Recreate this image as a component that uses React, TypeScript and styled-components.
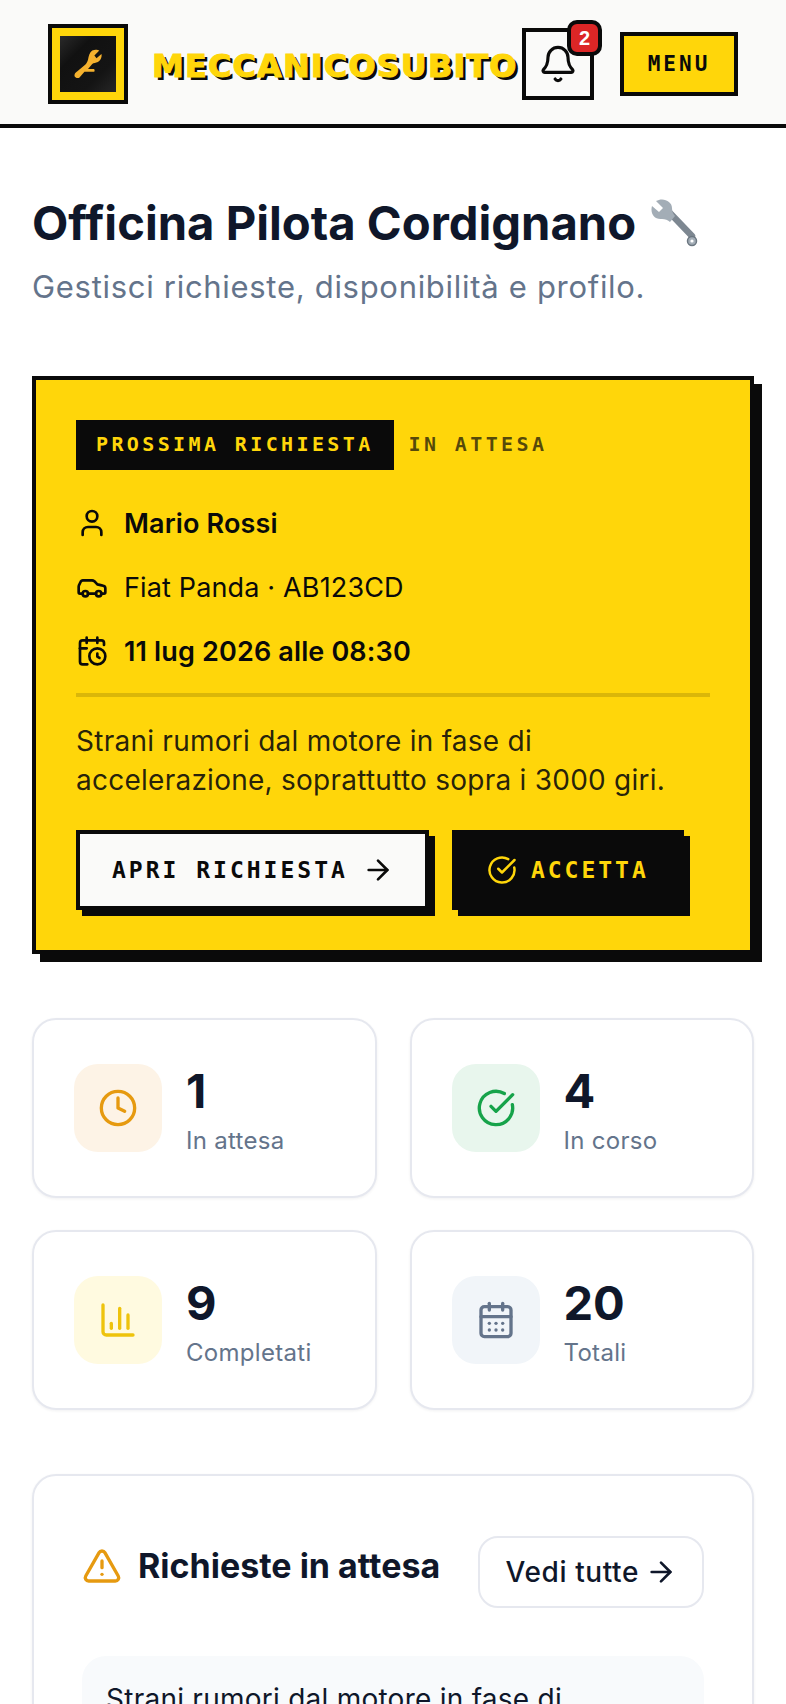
import { ReactNode } from "react";
import styled, { createGlobalStyle } from "styled-components";
import {
  ArrowRight,
  Bell,
  CalendarClock,
  CalendarDays,
  Car,
  ChartColumn,
  CircleCheckBig,
  Clock,
  TriangleAlert,
  User,
} from "lucide-react";

const GlobalStyle = createGlobalStyle`
  * { box-sizing: border-box; }
  html, body { margin: 0; padding: 0; background: #fff; }
  body { font-family: Inter, "Liberation Sans", sans-serif; color: #0f172a; }
  #root { height: 1704px; overflow: hidden; }
`;

const MONO = `"DejaVu Sans Mono", "Liberation Mono", monospace`;
const YELLOW = "#ffd60a";
const INK = "#0a0a0a";
const LINE = "#e6e8ef";

const Header = styled.header`
  display: flex;
  align-items: center;
  height: 128px;
  padding: 4px 48px 0;
  background: #fafaf9;
  border-bottom: 4px solid ${INK};
`;

const LogoFrame = styled.div`
  flex: none;
  width: 80px;
  height: 80px;
  padding: 8px;
  background: ${YELLOW};
  border: 4px solid ${INK};
`;

const LogoImage = styled.div`
  display: flex;
  align-items: center;
  justify-content: center;
  width: 100%;
  height: 100%;
  background: linear-gradient(135deg, #2a2a2a 0%, #111 30%, #141414 70%, #262626 100%);
`;

const Brand = styled.div`
  flex: none;
  margin: 4px 0 0 24px;
  width: 370px;
  font-family: "DejaVu Sans", "Liberation Sans", sans-serif;
  font-size: 32px;
  font-weight: 700;
  letter-spacing: 1.1px;
  white-space: nowrap;
  color: ${YELLOW};
  -webkit-text-stroke: 1px ${YELLOW};
  text-shadow: 3px 3px 0 ${INK};
`;

const BellButton = styled.button`
  position: relative;
  flex: none;
  display: flex;
  align-items: center;
  justify-content: center;
  width: 72px;
  height: 72px;
  padding: 0;
  background: #fafaf9;
  border: 4px solid ${INK};
  color: ${INK};
`;

const Badge = styled.span`
  position: absolute;
  top: -12px;
  right: -12px;
  display: flex;
  align-items: center;
  justify-content: center;
  width: 35px;
  height: 36px;
  background: #dc2626;
  border: 4px solid ${INK};
  border-radius: 10px;
  color: #fff;
  font-family: "Liberation Sans", sans-serif;
  font-size: 20px;
  font-weight: 700;
`;

const MenuButton = styled.button`
  flex: none;
  width: 118px;
  height: 64px;
  margin-left: 26px;
  padding: 0;
  background: ${YELLOW};
  border: 4px solid ${INK};
  color: ${INK};
  font-family: ${MONO};
  font-size: 21px;
  font-weight: 700;
  letter-spacing: 3px;
`;

const Main = styled.main`
  padding: 64px 32px 0;
`;

const Title = styled.h1`
  display: flex;
  align-items: center;
  gap: 14px;
  margin: 0;
  font-size: 47.2px;
  line-height: 62px;
  font-weight: 700;
  color: #0f172a;
`;

const Subtitle = styled.p`
  margin: 12px 0 0;
  font-size: 31px;
  letter-spacing: 0.7px;
  line-height: 42px;
  color: #64748b;
`;

const NextCard = styled.section`
  margin-top: 68px;
  padding: 40px;
  background: ${YELLOW};
  border: 4px solid ${INK};
  box-shadow: 8px 8px 0 ${INK};
  color: ${INK};
`;

const TagRow = styled.div`
  display: flex;
  align-items: center;
  gap: 15px;
  margin-bottom: 21px;
`;

const Tag = styled.span<{ $dark?: boolean }>`
  padding: 0 ${(p) => (p.$dark ? "20px" : "0")};
  line-height: 48px;
  padding-bottom: 2px;
  font-family: ${MONO};
  font-size: 20px;
  font-weight: 700;
  letter-spacing: 3.38px;
  white-space: nowrap;
  background: ${(p) => (p.$dark ? INK : "transparent")};
  color: ${(p) => (p.$dark ? YELLOW : "rgba(10, 10, 10, 0.7)")};
`;

const InfoRow = styled.div<{ $weight: number }>`
  display: flex;
  align-items: center;
  gap: 16px;
  height: 64px;
  font-size: 27px;
  letter-spacing: 0.15px;
  font-weight: ${(p) => p.$weight};
`;

const Divider = styled.hr`
  height: 4px;
  margin: 10px 0 25px;
  border: 0;
  background: rgba(10, 10, 10, 0.15);
`;

const Description = styled.p`
  margin: 0 0 31px;
  font-size: 28px;
  letter-spacing: 0.25px;
  line-height: 38.5px;
  color: rgba(10, 10, 10, 0.9);
`;

const Actions = styled.div`
  display: flex;
  gap: 23px;
`;

const ActionButton = styled.button<{ $dark?: boolean }>`
  display: flex;
  align-items: center;
  gap: 14px;
  height: 80px;
  padding: 0 31px 0 ${(p) => (p.$dark ? "31px" : "32px")};
  background: ${(p) => (p.$dark ? INK : "#fafaf9")};
  border: 4px solid ${INK};
  box-shadow: 6px 6px 0 ${INK};
  color: ${(p) => (p.$dark ? YELLOW : INK)};
  font-family: ${MONO};
  font-size: 23px;
  font-weight: 700;
  letter-spacing: 3px;
  white-space: nowrap;
`;

const StatGrid = styled.div`
  display: grid;
  grid-template-columns: 1fr 1fr;
  gap: 32px 33px;
  margin-top: 64px;
`;

const StatCard = styled.div`
  display: flex;
  align-items: center;
  gap: 24px;
  height: 180px;
  padding: 0 40px;
  background: #fff;
  border: 2px solid ${LINE};
  border-radius: 24px;
  box-shadow: 0 1px 3px rgba(15, 23, 42, 0.06);
`;

const StatIcon = styled.div<{ $bg: string; $fg: string }>`
  flex: none;
  display: flex;
  align-items: center;
  justify-content: center;
  width: 88px;
  height: 88px;
  border-radius: 24px;
  background: ${(p) => p.$bg};
  color: ${(p) => p.$fg};
`;

const StatText = styled.div`
  padding-top: 3px;
`;

const StatValue = styled.div`
  font-size: 47px;
  line-height: 56px;
  font-weight: 700;
  color: #0f172a;
`;

const StatLabel = styled.div`
  margin-top: 6px;
  font-size: 24px;
  letter-spacing: 0.3px;
  line-height: 32px;
  color: #64748b;
`;

const Panel = styled.section`
  margin-top: 64px;
  padding: 60px 48px;
  background: #fff;
  border: 2px solid ${LINE};
  border-radius: 24px;
  box-shadow: 0 1px 3px rgba(15, 23, 42, 0.06);
`;

const PanelHeader = styled.div`
  display: flex;
  align-items: center;
  justify-content: space-between;
`;

const PanelTitle = styled.h2`
  display: flex;
  align-items: center;
  gap: 16px;
  margin: 0 0 12px;
  font-size: 34px;
  line-height: 44px;
  font-weight: 700;
  color: #0f172a;
`;

const GhostButton = styled.button`
  display: flex;
  align-items: center;
  gap: 6px;
  height: 72px;
  padding: 0 25px 0 26px;
  background: #fff;
  border: 2px solid ${LINE};
  border-radius: 20px;
  color: #0f172a;
  font-family: inherit;
  font-size: 28px;
  letter-spacing: 0.6px;
  font-weight: 500;
`;

const RequestItem = styled.div`
  margin-top: 48px;
  padding: 24px;
  background: #f8fafc;
  border-radius: 24px;
  font-size: 28px;
  letter-spacing: 0.25px;
  line-height: 38px;
  color: #0f172a;
`;

function WrenchEmoji() {
  return (
    <svg width="48" height="48" viewBox="0 0 48 48" aria-hidden="true">
      <path d="M42 37 L19 13" stroke="#7d8791" strokeWidth="6.5" strokeLinecap="round" />
      <path
        d="M6 2 L13 9 L9 13 L2 7 C0 14 4 21 12 20 C15 20 18 21 20 23 L25 17 C23 15 22 12 22 9 C22 2 13 -2 6 2 Z"
        fill="#a3adb6"
      />
      <circle cx="42" cy="42" r="4.5" fill="#a3adb6" stroke="#6b7680" strokeWidth="1.5" />
      <circle cx="42" cy="42" r="1.6" fill="#fff" />
    </svg>
  );
}

function LogoWrench() {
  return (
    <svg width="34" height="34" viewBox="0 0 24 24" aria-hidden="true" fill="#f4b12e">
      <path d="M15 2.5 C17 1.5 19 2 20 2.5 L16.5 6 L18 8 L21.5 5 C22 7 21 9.5 19 10.5 C17.5 11.2 16 11 15 12 L12 15.5 L16 15.5 C16.8 15.5 17 17.5 16 17.5 L9.5 17.5 L6 21.5 C5 22.5 2 21.5 2.5 19.5 C2.8 18.5 3.5 18 4.5 17.2 L10 12.5 C11 11.5 11.5 10.5 12 9 C12.5 6.5 13 4 15 2.5 Z" />
    </svg>
  );
}

function Stat({ icon, bg, fg, value, label }: { icon: ReactNode; bg: string; fg: string; value: string; label: string }) {
  return (
    <StatCard>
      <StatIcon $bg={bg} $fg={fg}>{icon}</StatIcon>
      <StatText>
        <StatValue>{value}</StatValue>
        <StatLabel>{label}</StatLabel>
      </StatText>
    </StatCard>
  );
}

export default function App() {
  return (
    <>
      <GlobalStyle />
      <Header>
        <LogoFrame>
          <LogoImage>
            <LogoWrench />
          </LogoImage>
        </LogoFrame>
        <Brand>MECCANICOSUBITO</Brand>
        <BellButton>
          <Bell size={40} strokeWidth={1.9} />
          <Badge>2</Badge>
        </BellButton>
        <MenuButton>MENU</MenuButton>
      </Header>
      <Main>
        <Title>
          Officina Pilota Cordignano
          <WrenchEmoji />
        </Title>
        <Subtitle>Gestisci richieste, disponibilità e profilo.</Subtitle>

        <NextCard>
          <TagRow>
            <Tag $dark>PROSSIMA RICHIESTA</Tag>
            <Tag>IN ATTESA</Tag>
          </TagRow>
          <InfoRow $weight={600}>
            <User size={32} />
            Mario Rossi
          </InfoRow>
          <InfoRow $weight={400}>
            <Car size={32} />
            Fiat Panda · AB123CD
          </InfoRow>
          <InfoRow $weight={600}>
            <CalendarClock size={32} />
            11 lug 2026 alle 08:30
          </InfoRow>
          <Divider />
          <Description>
            Strani rumori dal motore in fase di
            <br />
            accelerazione, soprattutto sopra i 3000 giri.
          </Description>
          <Actions>
            <ActionButton>
              APRI RICHIESTA
              <ArrowRight size={32} />
            </ActionButton>
            <ActionButton $dark>
              <CircleCheckBig size={30} />
              ACCETTA
            </ActionButton>
          </Actions>
        </NextCard>

        <StatGrid>
          <Stat icon={<Clock size={40} />} bg="#fdf3e6" fg="#e69a10" value="1" label="In attesa" />
          <Stat icon={<CircleCheckBig size={40} />} bg="#e8f6ed" fg="#16a34a" value="4" label="In corso" />
          <Stat icon={<ChartColumn size={40} />} bg="#fffae0" fg="#eec30c" value="9" label="Completati" />
          <Stat icon={<CalendarDays size={40} />} bg="#f1f5f9" fg="#64748b" value="20" label="Totali" />
        </StatGrid>

        <Panel>
          <PanelHeader>
            <PanelTitle>
              <TriangleAlert size={40} color="#e69a10" />
              Richieste in attesa
            </PanelTitle>
            <GhostButton>
              Vedi tutte
              <ArrowRight size={32} />
            </GhostButton>
          </PanelHeader>
          <RequestItem>Strani rumori dal motore in fase di</RequestItem>
        </Panel>
      </Main>
    </>
  );
}
